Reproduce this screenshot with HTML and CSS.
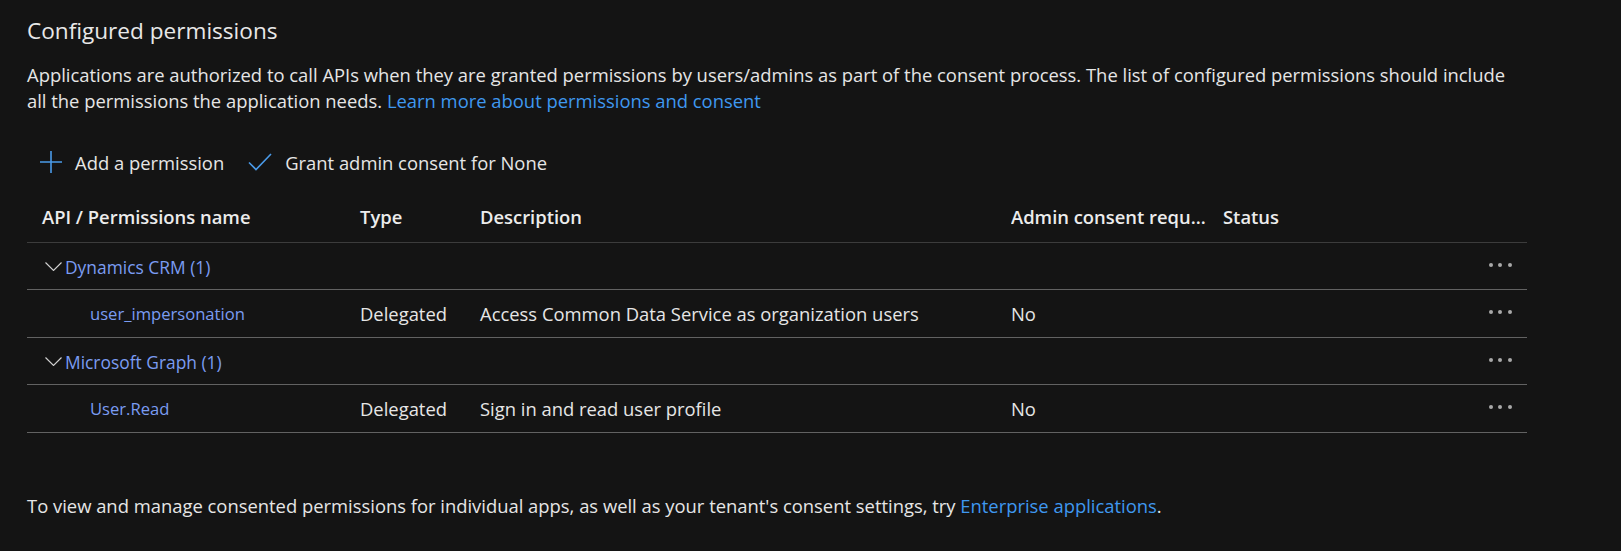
FILE: index.html
```html
<!DOCTYPE html>
<html lang="en">
<head>
<meta charset="utf-8">
<title>Configured permissions</title>
<link rel="stylesheet" href="styles.css">
</head>
<body>
<main class="page">
  <h2 class="title">Configured permissions</h2>
  <p class="intro">Applications are authorized to call APIs when they are granted permissions by users/admins as part of the consent process. The list of configured permissions should include all the permissions the application needs. <a class="link" href="#">Learn more about permissions and consent</a></p>

  <div class="toolbar">
    <button class="tool" type="button">
      <svg class="icon icon-plus" width="22" height="22" viewBox="0 0 22 22"><path d="M11 0V22M0 11H22"/></svg>
      <span>Add a permission</span>
    </button>
    <button class="tool" type="button">
      <svg class="icon icon-check" width="24" height="18" viewBox="0 0 24 18"><path d="M1 9.5L8 16.5L23 1"/></svg>
      <span>Grant admin consent for None</span>
    </button>
  </div>

  <div class="perm-table">
    <div class="row head">
      <div class="cell name">API / Permissions name</div>
      <div class="cell">Type</div>
      <div class="cell">Description</div>
      <div class="cell trunc">Admin consent required</div>
      <div class="cell">Status</div>
      <div class="cell"></div>
    </div>

    <div class="row group">
      <div class="cell group-name">
        <svg class="chevron" width="17" height="9" viewBox="0 0 17 9"><path d="M0.5 0.5L8.5 8.5L16.5 0.5"/></svg>
        <a class="api-link" href="#">Dynamics CRM (1)</a>
      </div>
      <div class="cell"></div><div class="cell"></div><div class="cell"></div><div class="cell"></div>
      <div class="cell more"><span class="dot"></span><span class="dot"></span><span class="dot"></span></div>
    </div>

    <div class="row item">
      <div class="cell item-name"><a class="api-link" href="#">user_impersonation</a></div>
      <div class="cell">Delegated</div>
      <div class="cell">Access Common Data Service as organization users</div>
      <div class="cell">No</div>
      <div class="cell"></div>
      <div class="cell more"><span class="dot"></span><span class="dot"></span><span class="dot"></span></div>
    </div>

    <div class="row group">
      <div class="cell group-name">
        <svg class="chevron" width="17" height="9" viewBox="0 0 17 9"><path d="M0.5 0.5L8.5 8.5L16.5 0.5"/></svg>
        <a class="api-link" href="#">Microsoft Graph (1)</a>
      </div>
      <div class="cell"></div><div class="cell"></div><div class="cell"></div><div class="cell"></div>
      <div class="cell more"><span class="dot"></span><span class="dot"></span><span class="dot"></span></div>
    </div>

    <div class="row item">
      <div class="cell item-name"><a class="api-link" href="#">User.Read</a></div>
      <div class="cell">Delegated</div>
      <div class="cell">Sign in and read user profile</div>
      <div class="cell">No</div>
      <div class="cell"></div>
      <div class="cell more"><span class="dot"></span><span class="dot"></span><span class="dot"></span></div>
    </div>
  </div>

  <p class="footer">To view and manage consented permissions for individual apps, as well as your tenant's consent settings, try <a class="link" href="#">Enterprise applications</a>.</p>
</main>
</body>
</html>
```

FILE: styles.css
```css
* { box-sizing: border-box; }

html, body {
  margin: 0;
  background: #141414;
}

body {
  font-family: "Open Sans", "Noto Sans", "Liberation Sans", sans-serif;
  font-size: 18.4px;
  line-height: 26px;
  color: #e6e6e6;
}

.page {
  padding: 15px 0 0 27px;
  width: 1527px;
}

.title {
  margin: 0;
  font-size: 22.6px;
  line-height: 32px;
  font-weight: 400;
  color: #e8e8e8;
}

.intro {
  margin: 15px 0 0;
}

.link {
  color: #3f98f0;
  text-decoration: none;
}

.toolbar {
  display: flex;
  gap: 24px;
  margin-top: 31px;
  padding-left: 13px;
  height: 36px;
}

.tool {
  display: flex;
  align-items: center;
  gap: 13px;
  padding: 0;
  border: 0;
  background: none;
  color: #e6e6e6;
  font: inherit;
  cursor: pointer;
}

.icon {
  fill: none;
  stroke: #4a9ae8;
  stroke-width: 1.6;
  margin-bottom: 2px;
}

.perm-table {
  width: 1500px;
}

.row {
  display: grid;
  grid-template-columns: 333px 120px 531px 212px 1fr 60px;
  align-items: center;
  border-bottom: 1px solid #626262;
}

.row.head {
  align-items: start;
  padding: 23px 0 12px;
  font-weight: 600;
  color: #ececec;
  border-bottom-color: #3c3c3c;
}

.row.group { height: 47px; padding-top: 1px; }
.row.item { height: 48px; padding-top: 1px; }

.cell {
  white-space: nowrap;
  min-width: 0;
}

.cell.name { padding-left: 15px; }

.cell.trunc {
  overflow: hidden;
  text-overflow: ellipsis;
  padding-right: 16px;
}

.group-name {
  display: flex;
  align-items: center;
  gap: 3px;
  padding-left: 18px;
  font-size: 17.4px;
}

.chevron {
  fill: none;
  stroke: #d2d2d2;
  stroke-width: 1.1;
}

.item-name {
  padding-left: 63px;
  font-size: 16.6px;
}

.api-link {
  color: #7b9cf2;
  text-decoration: none;
}

.more {
  display: flex;
  justify-content: flex-end;
  gap: 5.7px;
  padding-right: 15px;
  margin-bottom: 4px;
}

.dot {
  width: 4px;
  height: 4px;
  border-radius: 50%;
  background: #a8a8a8;
}

.footer {
  margin: 60px 0 0;
}
```
